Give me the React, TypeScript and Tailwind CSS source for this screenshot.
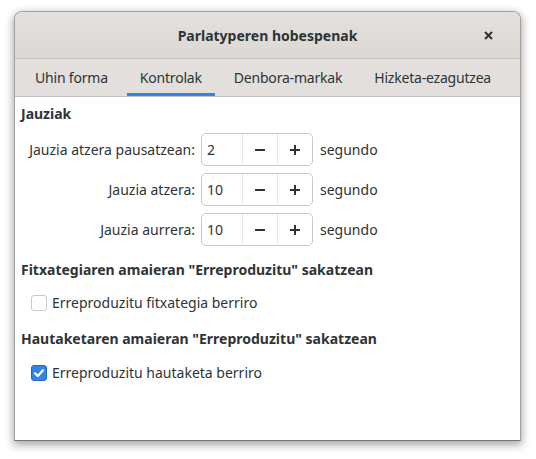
import { useState } from 'react';

const font = { fontFamily: '"Noto Sans", "DejaVu Sans", sans-serif' };

function SpinRow({ label, value }: { label: string; value: string }) {
  return (
    <div className="flex items-center h-[33px]">
      <div className="w-[180px] text-right pr-[6px] text-[#2e3436]">{label}</div>
      <div className="flex h-[33px] w-[112px] rounded-[5px] border border-[#cdc7c2] bg-white">
        <div className="flex-1 flex items-center pl-[5px] text-[#2e3436]">{value}</div>
        <div className="w-[35px] flex items-center justify-center border-l border-[#e9e7e4]">
          <svg width="12" height="12" viewBox="0 0 12 12"><rect x="1" y="5" width="10" height="2" fill="#2e3436" /></svg>
        </div>
        <div className="w-[35px] flex items-center justify-center border-l border-[#e9e7e4]">
          <svg width="12" height="12" viewBox="0 0 12 12"><rect x="1" y="5" width="10" height="2" fill="#2e3436" /><rect x="5" y="1" width="2" height="10" fill="#2e3436" /></svg>
        </div>
      </div>
      <div className="pl-[7px] text-[#2e3436]">segundo</div>
    </div>
  );
}

function Check({ checked, label }: { checked: boolean; label: string }) {
  return (
    <div className="flex items-center gap-[5px] pl-[10px]">
      {checked ? (
        <div className="w-[16px] h-[16px] rounded-[3px] bg-[#3584e4] border border-[#1b6acb] flex items-center justify-center">
          <svg width="12" height="12" viewBox="0 0 12 12"><path d="M2 6.2 L4.8 9 L10 3.2" stroke="white" strokeWidth="2.2" fill="none" strokeLinecap="round" strokeLinejoin="round" /></svg>
        </div>
      ) : (
        <div className="w-[16px] h-[16px] rounded-[3px] bg-white border border-[#cdc7c2]" />
      )}
      <span className="text-[#2e3436]">{label}</span>
    </div>
  );
}

export default function App() {
  const [tab] = useState(1);
  const tabs = ['Uhin forma', 'Kontrolak', 'Denbora-markak', 'Hizketa-ezagutzea'];
  return (
    <div className="w-[536px] h-[459px] bg-white pt-[11px] pl-[14px] text-[14px]" style={font}>
      <div className="w-[507px] h-[430px] flex flex-col rounded-t-[8px] border border-[#a6a19b] border-b-[#7a7672] shadow-[0_3px_9px_1px_rgba(0,0,0,0.35)] overflow-hidden bg-white">
        <div className="h-[47px] flex items-center justify-center relative bg-gradient-to-b from-[#e3e0dd] to-[#dcd8d4] border-b border-[#c8c2bc]">
          <span className="font-bold text-[#2e3436] text-[14px]">Parlatyperen hobespenak</span>
          <svg className="absolute right-[27px] top-[19px]" width="9" height="9" viewBox="0 0 9 9">
            <path d="M1 1 L8 8 M8 1 L1 8" stroke="#2e3436" strokeWidth="2" />
          </svg>
        </div>
        <div className="h-[38px] flex items-stretch gap-[6px] bg-[#e2dfdc] border-b border-[#c8c2bc] px-[7px]">
          {tabs.map((t, i) => (
            <div key={t} className="shrink-0 whitespace-nowrap flex items-center justify-center px-[13px] relative tracking-[-0.2px] text-[#2e3436]">
              {t}
              {i === tab && <div className="absolute left-0 right-0 bottom-0 h-[3px] bg-[#3584e4]" />}
            </div>
          ))}
        </div>
        <div className="flex-1 bg-white px-[6px] pt-[6px]">
          <div className="font-bold text-[#2e3436]">Jauziak</div>
          <div className="flex flex-col gap-[7px] mt-[9px]">
            <SpinRow label="Jauzia atzera pausatzean:" value="2" />
            <SpinRow label="Jauzia atzera:" value="10" />
            <SpinRow label="Jauzia aurrera:" value="10" />
          </div>
          <div className="font-bold text-[#2e3436] mt-[13px]">Fitxategiaren amaieran "Erreproduzitu" sakatzean</div>
          <div className="mt-[12px]"><Check checked={false} label="Erreproduzitu fitxategia berriro" /></div>
          <div className="font-bold text-[#2e3436] mt-[15px]">Hautaketaren amaieran "Erreproduzitu" sakatzean</div>
          <div className="mt-[13px]"><Check checked label="Erreproduzitu hautaketa berriro" /></div>
        </div>
      </div>
    </div>
  );
}
